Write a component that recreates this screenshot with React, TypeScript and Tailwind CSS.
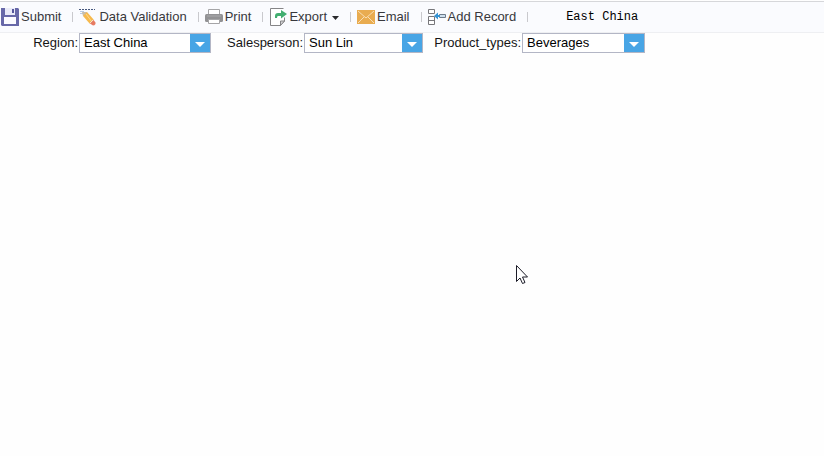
import React, { useState } from 'react'

interface ToolButtonProps {
  label: string
  icon: React.ReactNode
  hasMenu?: boolean
}

interface FilterProps {
  id: string
  label: string
  value: string
  options: string[]
  onChange: (value: string) => void
}

function SaveIcon() {
  return (
    <svg width="18" height="18" viewBox="0 0 18 18" aria-hidden="true">
      <path d="M0 0h17l1 1v17H1l-1-1z" fill="#6768a8" />
      <path d="M4 0h10v7H4z" fill="#e9eaf8" />
      <path d="M11 1h2v4h-2z" fill="#55569c" />
      <path d="M3 9h12v7H3z" fill="#fbfbff" />
    </svg>
  )
}

function ValidateIcon() {
  return (
    <svg width="18" height="18" viewBox="0 0 18 18" aria-hidden="true">
      <path d="M0 1.5h16" stroke="#45567c" strokeWidth="1" strokeDasharray="2 1" />
      <path d="M1 3.5h4M1 5.5h3" stroke="#b9cbe3" strokeWidth="1" />
      <path d="M4 4l4 0 7 8-4 4-7-8z" fill="#f6b94c" />
      <path d="M3 4l5 0-4 4z" fill="#c9bda8" />
      <path d="M7 6l6 8" stroke="#fbd88f" strokeWidth="1" />
      <path d="M14.500 12l2 2.500q.5 2.500-2.500 3L11 15.500z" fill="#e67a62" />
      <path d="M14.500 11.500l-4 4" stroke="#efe2cf" strokeWidth="1" />
    </svg>
  )
}

function PrintIcon() {
  return (
    <svg width="18" height="18" viewBox="0 0 18 18" aria-hidden="true">
      <path d="M3.500 7V1.500h11V7" fill="#fff" stroke="#a5a5a7" />
      <rect x="0" y="6" width="18" height="8" rx="1.500" fill="#929294" />
      <path d="M2 8h14" stroke="#aaaaac" />
      <path d="M3.500 11.500h11v4h-11z" fill="#fff" stroke="#a5a5a7" />
    </svg>
  )
}

function ExportIcon() {
  return (
    <svg width="18" height="18" viewBox="0 0 18 18" aria-hidden="true">
      <path d="M1.500 .5h14v12.500l-4 4.500h-10z" fill="#fff" stroke="#858587" />
      <path d="M11.500 17.500V13h4z" fill="#d4d4d6" stroke="#858587" />
      <path d="M15.500 0v9.500" stroke="#fafbfe" strokeWidth="2" />
      <path d="M6 10V8q0-3 3-3h3V2l6 4-6 4.500V8H9q-1 0-1 2z" fill="#42ae70" />
    </svg>
  )
}

function MailIcon() {
  return (
    <svg width="18" height="18" viewBox="0 0 18 18" aria-hidden="true">
      <rect x="0" y="2" width="18" height="14" fill="#e9ac50" />
      <path d="M1 3l8 7 8-7M1 15l6-6M17 15l-6-6" fill="none" stroke="#f9dfb4" strokeWidth="1" />
    </svg>
  )
}

function RecordIcon() {
  return (
    <svg width="18" height="18" viewBox="0 0 18 18" aria-hidden="true">
      <path d="M.5 1.500h6v4h-6zM.5 8.500h6v8h-6zM.5 12.500h6" fill="#fff" stroke="#77777b" />
      <path d="M11.500 6.500h6v3h-6z" fill="#cfe0ee" stroke="#6c7a8a" />
      <path d="M6 8l4-3.500V7h2v2h-2v2.500z" fill="#3593d3" />
    </svg>
  )
}

function ToolButton({ label, icon, hasMenu }: ToolButtonProps) {
  return (
    <div className="flex items-center">
      <button type="button" className="flex items-center gap-0.5 whitespace-nowrap text-[#38383c]">
        {icon}
        <span>{label}</span>
        {hasMenu && (
          <svg className="ml-0.5 mt-0.5" width="8" height="4" viewBox="0 0 8 4" aria-hidden="true">
            <path d="M1 0h7L4.500 4z" fill="#29292c" />
          </svg>
        )}
      </button>
      <span className="ml-[11px] mr-1.5 h-2.5 w-px bg-[#c9c9cd]" />
    </div>
  )
}

function Filter({ id, label, value, options, onChange }: FilterProps) {
  return (
    <>
      <label htmlFor={id} className="pr-px text-right whitespace-nowrap">
        {label}
      </label>
      <div className="grid">
        <select
          id={id}
          value={value}
          onChange={(e) => onChange(e.target.value)}
          className="col-start-1 row-start-1 h-5 appearance-none border border-[#b3b6c5] bg-white pl-1 pr-6 leading-4 text-black outline-none"
        >
          {options.map((option) => (
            <option key={option}>{option}</option>
          ))}
        </select>
        <span className="pointer-events-none col-start-1 row-start-1 my-px mr-px flex w-5 items-center justify-center justify-self-end bg-[#48a5e5]">
          <svg className="mt-0.5" width="10" height="5" viewBox="0 0 10 5" aria-hidden="true">
            <path d="M0 0h10L5 5z" fill="#fff" />
          </svg>
        </span>
      </div>
    </>
  )
}

export default function App() {
  const [region, setRegion] = useState<string>('East China')
  const [salesperson, setSalesperson] = useState<string>('Sun Lin')
  const [productType, setProductType] = useState<string>('Beverages')

  return (
    <div className="relative min-h-screen bg-[#fefefe] pt-px font-['Liberation_Sans',Arial,sans-serif] text-[13px] leading-4 text-[#161616]">
      {/* Toolbar */}
      <header className="flex h-8 items-center border-y border-t-[#d6d7da] border-b-[#eeeff2] bg-[#fafbfe] pl-px">
        <ToolButton label="Submit" icon={<SaveIcon />} />
        <ToolButton label="Data Validation" icon={<ValidateIcon />} />
        <ToolButton label="Print" icon={<PrintIcon />} />
        <ToolButton label="Export" icon={<ExportIcon />} hasMenu />
        <ToolButton label="Email" icon={<MailIcon />} />
        <ToolButton label="Add Record" icon={<RecordIcon />} />
        <span className="ml-8 whitespace-nowrap font-['Liberation_Mono',monospace] text-xs text-black">
          {region}
        </span>
      </header>

      {/* Query parameters */}
      <form className="grid grid-cols-[79px_132px_93px_119px_99px_123px] items-center">
        <Filter
          id="region"
          label="Region:"
          value={region}
          options={['East China', 'North China']}
          onChange={setRegion}
        />
        <Filter
          id="salesperson"
          label="Salesperson:"
          value={salesperson}
          options={['Sun Lin']}
          onChange={setSalesperson}
        />
        <Filter
          id="product-types"
          label="Product_types:"
          value={productType}
          options={['Beverages']}
          onChange={setProductType}
        />
      </form>

      {/* Mouse pointer */}
      <svg
        className="pointer-events-none absolute left-[516px] top-[264px]"
        width="13"
        height="21"
        viewBox="0 0 13 21"
        aria-hidden="true"
      >
        <path
          d="M.5 1.500v16l3.500-3.500 2.500 5.500 2.500-1-2.500-5.500h5z"
          fill="#fff"
          stroke="#1c1c28"
        />
      </svg>
    </div>
  )
}
